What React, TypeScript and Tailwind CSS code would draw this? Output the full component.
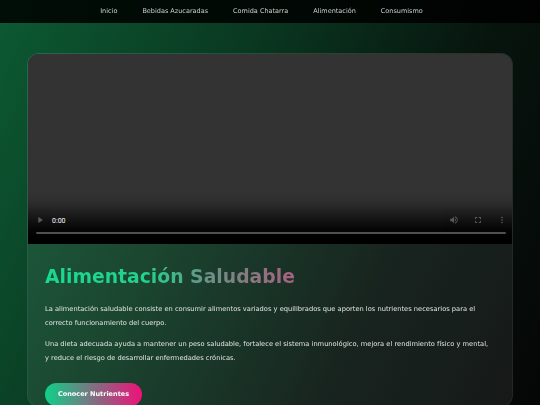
const links = ["Inicio", "Bebidas Azucaradas", "Comida Chatarra", "Alimentación", "Consumismo"];

export default function App() {
  return (
    <div
      className="h-[405px] overflow-hidden bg-[linear-gradient(115deg,#0c5a33_0%,#0a3a22_35%,#07140e_70%,#050606_100%)] text-white antialiased"
      style={{ fontFamily: '"DejaVu Sans", "Noto Sans", sans-serif' }}
    >
      <nav className="flex h-[23px] items-center justify-center gap-[25px] bg-black/85 pr-[17px] [will-change:opacity]">
        {links.map((l) => (
          <a key={l} className="text-[6.5px] text-[#c9cfcc]">
            {l}
          </a>
        ))}
      </nav>

      <div className="mx-auto mt-[30px] w-[486px] overflow-hidden rounded-[12px] border border-white/[0.06] bg-white/[0.07]">
        {/* native controls, drawn at twice the size and scaled down */}
        <div className="h-[190px] w-full overflow-hidden bg-[#333333]">
          <video controls className="block h-[380px] w-[972px] max-w-none origin-top-left scale-50 bg-[#333333]" />
        </div>
        <div className="px-[17px] pt-[20px] [will-change:opacity]">
          <h1 className="w-fit bg-[linear-gradient(90deg,#19d98f_0%,#27cf8e_42%,#6d8f85_66%,#a9607f_100%)] bg-clip-text text-[18.8px] leading-[26px] font-bold text-transparent">
            Alimentación Saludable
          </h1>
          <p className="mt-[12px] max-w-[446px] text-[6.7px] leading-[14px] text-[#dfe3e1]">
            La alimentación saludable consiste en consumir alimentos variados y equilibrados que aporten los nutrientes necesarios para el correcto funcionamiento del cuerpo.
          </p>
          <p className="mt-[7px] max-w-[446px] text-[6.7px] leading-[14px] text-[#dfe3e1]">
            Una dieta adecuada ayuda a mantener un peso saludable, fortalece el sistema inmunológico, mejora el rendimiento físico y mental, y reduce el riesgo de desarrollar enfermedades crónicas.
          </p>
          <button className="mt-[18px] h-[23px] w-[97px] rounded-full bg-[linear-gradient(90deg,#0fd08a,#f0107a)] text-[6.5px] font-bold text-white">
            Conocer Nutrientes
          </button>
        </div>
      </div>
    </div>
  );
}
